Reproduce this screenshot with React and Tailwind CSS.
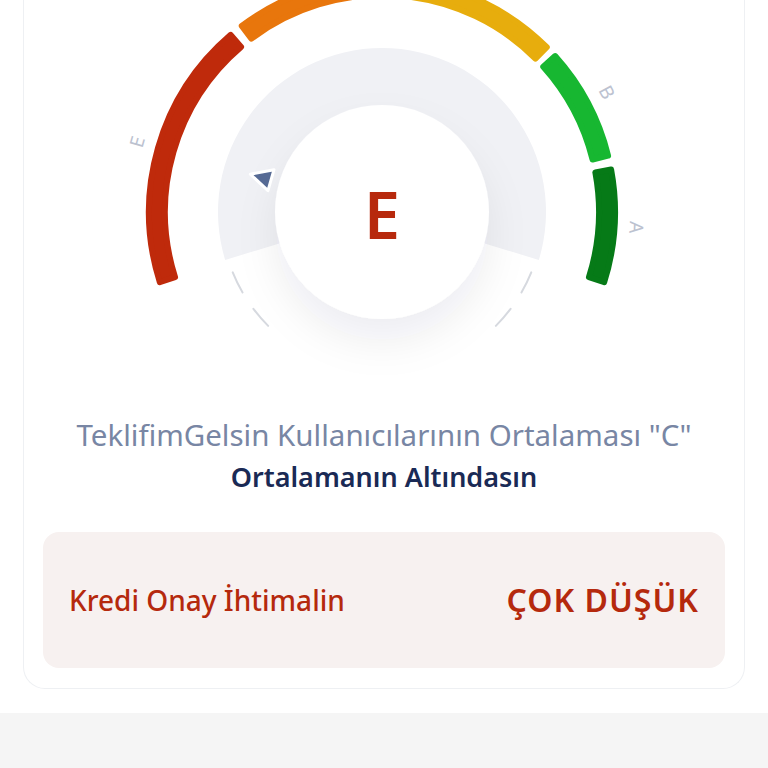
const CX = 358;
const CY = 212;

const SEGMENTS = [
  { grade: "E", from: -107.5, to: -40.5, color: "#bf2a0b" },
  { grade: "D", from: -37, to: 3, color: "#e8760c" },
  { grade: "C", from: 6, to: 45, color: "#e7ad0d" },
  { grade: "B", from: 48, to: 76, color: "#17b731" },
  { grade: "A", from: 79.5, to: 107.5, color: "#067a17" },
];

function pt(deg, r) {
  const a = (deg * Math.PI) / 180;
  return [CX + r * Math.sin(a), CY - r * Math.cos(a)];
}

function sector(from, to, r1, r2) {
  const large = to - from > 180 ? 1 : 0;
  const [ax, ay] = pt(from, r2);
  const [bx, by] = pt(to, r2);
  const [cx, cy] = pt(to, r1);
  const [dx, dy] = pt(from, r1);
  return `M${ax} ${ay} A${r2} ${r2} 0 ${large} 1 ${bx} ${by} L${cx} ${cy} A${r1} ${r1} 0 ${large} 0 ${dx} ${dy} Z`;
}

function arc(from, to, r) {
  const [ax, ay] = pt(from, r);
  const [bx, by] = pt(to, r);
  return `M${ax} ${ay} A${r} ${r} 0 0 ${to > from ? 1 : 0} ${bx} ${by}`;
}

function pie(from, to, r) {
  const [ax, ay] = pt(from, r);
  const [bx, by] = pt(to, r);
  return `M${CX} ${CY} L${ax} ${ay} A${r} ${r} 0 1 1 ${bx} ${by} Z`;
}

function Pointer({ angle }) {
  const tip = pt(angle, 137);
  const l = pt(angle - 5.4, 116);
  const r = pt(angle + 5.4, 116);
  return (
    <polygon
      points={`${tip.join(",")} ${l.join(",")} ${r.join(",")}`}
      fill="#566a94"
      stroke="#ffffff"
      strokeWidth="3"
      strokeLinejoin="round"
    />
  );
}

function Gauge({ grade }) {
  // labels for the top grades sit above the card's visible edge
  const labels = SEGMENTS.map((s) => {
    const mid = (s.from + s.to) / 2;
    const [x, y] = pt(mid, 255);
    return { ...s, mid, x, y };
  }).filter((l) => l.y > 12);

  return (
    <svg width="720" height="400" viewBox="0 0 720 400" className="block">
      <defs>
        <filter id="soft" x="-50%" y="-50%" width="200%" height="220%">
          <feDropShadow dx="0" dy="22" stdDeviation="20" floodColor="#1e2a4a" floodOpacity="0.07" />
        </filter>
      </defs>

      <path d={pie(-107, 107, 164)} fill="#f0f1f5" />
      <circle cx={CX} cy={CY} r="107" fill="#ffffff" filter="url(#soft)" />

      {[[-112, -120], [-127, -135], [112, 120], [127, 135]].map(([a, b]) => (
        <path key={a} d={arc(a, b, 161)} fill="none" stroke="#d6d9df" strokeWidth="2" strokeLinecap="round" />
      ))}

      {SEGMENTS.map((s) => (
        <path
          key={s.grade}
          d={sector(s.from, s.to, 217, 233)}
          fill={s.color}
          stroke={s.color}
          strokeWidth="6"
          strokeLinejoin="round"
        />
      ))}

      {labels.map((l) => (
        <text
          key={l.grade}
          x={l.x}
          y={l.y}
          transform={`rotate(${l.mid} ${l.x} ${l.y})`}
          textAnchor="middle"
          dominantBaseline="central"
          fill="#bcc2d0"
          fontSize="19"
          fontFamily="'Noto Sans', sans-serif"
        >
          {l.grade}
        </text>
      ))}

      <Pointer angle={-74} />

      <text
        x={CX}
        y={CY + 2}
        textAnchor="middle"
        dominantBaseline="central"
        fill="#b7290d"
        fontSize="65"
        fontWeight="600"
        fontFamily="'Noto Sans', sans-serif"
      >
        {grade}
      </text>
    </svg>
  );
}

export default function App() {
  return (
    <div className="min-h-screen bg-[#f5f5f5] font-['Noto_Sans',sans-serif]">
      <div className="bg-white px-[23px] pb-[24px]">
        <section className="rounded-b-[22px] border border-t-0 border-[#eef0f3] bg-white px-[19px] pb-[20px]">
          <div className="-mx-[19px]">
            <Gauge grade="E" />
          </div>

          <div className="mt-[19px] text-center">
            <p className="text-[29.5px] leading-[32px] text-[#7886a4]">
              TeklifimGelsin Kullanıcılarının Ortalaması "C"
            </p>
            <p className="mt-[10px] text-[27px] font-semibold leading-[32px] text-[#1a2a55]">
              Ortalamanın Altındasın
            </p>
          </div>

          <div className="mt-[39px] flex h-[136px] items-center justify-between rounded-[16px] bg-[#f7f1f0] px-[26px]">
            <span className="text-[28px] font-medium text-[#b5290d]">Kredi Onay İhtimalin</span>
            <span className="text-[32px] font-semibold tracking-[1px] text-[#b5290d]">ÇOK DÜŞÜK</span>
          </div>
        </section>
      </div>
    </div>
  );
}
